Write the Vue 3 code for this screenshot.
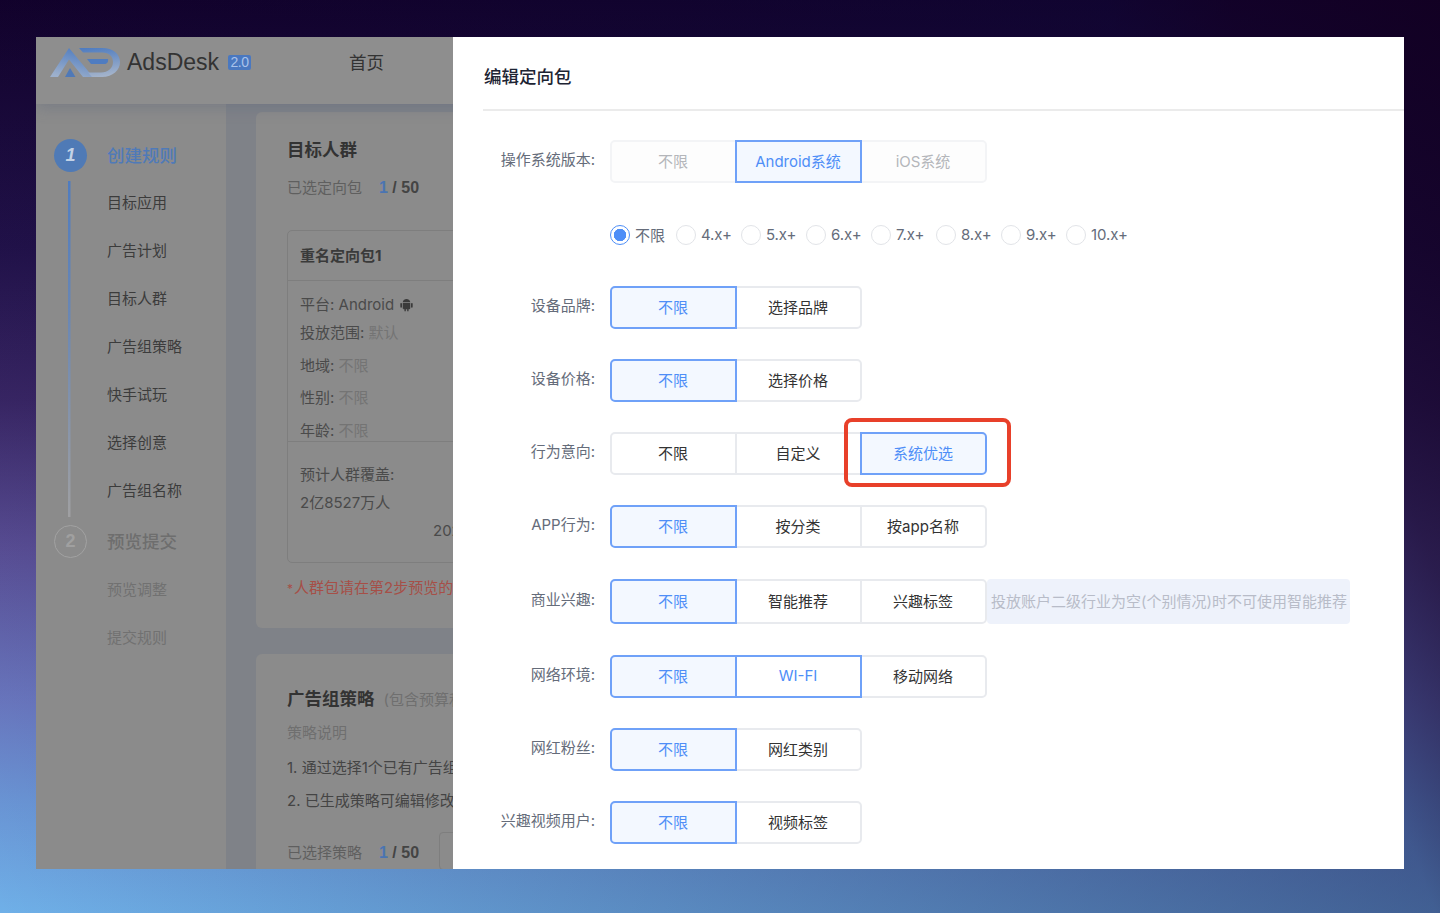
<script setup>
const subSteps = ['目标应用', '广告计划', '目标人群', '广告组策略', '快手试玩', '选择创意', '广告组名称']
const radios = ['不限', '4.x+', '5.x+', '6.x+', '7.x+', '8.x+', '9.x+', '10.x+']
const brandRow = { label: '设备品牌:', options: [['不限', 'on'], ['选择品牌', '']] }
const rows = [
  { label: '设备价格:', options: [['不限', 'on'], ['选择价格', '']] },
  { label: '行为意向:', options: [['不限', ''], ['自定义', ''], ['系统优选', 'on mark']] },
  { label: 'APP行为:', options: [['不限', 'on'], ['按分类', ''], ['按app名称', '']] },
  { label: '商业兴趣:', tall: true, tip: '投放账户二级行业为空(个别情况)时不可使用智能推荐', options: [['不限', 'on'], ['智能推荐', ''], ['兴趣标签', '']] },
  { label: '网络环境:', after: true, options: [['不限', 'on'], ['WI-FI', 'on plain'], ['移动网络', '']] },
  { label: '网红粉丝:', options: [['不限', 'on'], ['网红类别', '']] },
  { label: '兴趣视频用户:', options: [['不限', 'on'], ['视频标签', '']] }
]
</script>

<template>
  <div class="screen">
    <div class="window">
      <div class="page">
        <header class="top">
          <svg class="logo" viewBox="0 0 70 30" width="70" height="30" aria-label="AdsDesk">
            <defs>
              <linearGradient id="lg1" x1="0.7" y1="0" x2="0.3" y2="1">
                <stop offset="0" stop-color="#4f7cc0" />
                <stop offset="1" stop-color="#9db0cc" />
              </linearGradient>
              <linearGradient id="lg2" x1="0.2" y1="0" x2="0.4" y2="1">
                <stop offset="0" stop-color="#4f7cc0" />
                <stop offset="1" stop-color="#a3b3cb" />
              </linearGradient>
            </defs>
            <path d="M19 1 L43 30 H33 L19 12.5 L8 30 H0 Z" fill="url(#lg1)" />
            <path d="M15 30 L20 21 L25.5 30 Z" fill="#4f79b8" />
            <path d="M29 1 H52 C63 1 70 7 70 15 C70 23 63 30 52 30 H42 L38 25.5 H51 C58 25.5 63 21 63 15 C63 9.5 59 5.5 52 5.5 H33 Z" fill="url(#lg2)" />
            <path d="M37 12 H58 C58.5 15 57 17 54 17 H41 Z" fill="#4f7cc0" />
          </svg>
          <span class="brand">AdsDesk</span>
          <span class="ver">2.0</span>
          <nav class="nav">首页</nav>
        </header>
        <div class="body">
          <aside class="side">
            <div class="step">
              <span class="dot dot-on">1</span>
              <span class="step-name step-on">创建规则</span>
            </div>
            <div class="sub-line">
              <div class="sub-list">
                <div v-for="s in subSteps" :key="s" class="sub">{{ s }}</div>
              </div>
            </div>
            <div class="step step-two">
              <span class="dot dot-off">2</span>
              <span class="step-name step-off">预览提交</span>
            </div>
            <div class="sub-list-off">
              <div class="sub sub-off">预览调整</div>
              <div class="sub sub-off">提交规则</div>
            </div>
          </aside>
          <main class="main">
            <section class="card card-one">
              <h2 class="card-title">目标人群</h2>
              <div class="count">
                <span>已选定向包</span><b class="num"><i>1</i> / 50</b>
              </div>
              <div class="pack">
                <div class="pack-head">重名定向包1</div>
                <div class="pack-body">
                  <div class="info info-a">
                    平台: Android
                    <svg class="droid" viewBox="0 0 16 16" width="15" height="15">
                      <path d="M4 5.6 C4 3.4 5.8 2 8 2 C10.2 2 12 3.4 12 5.6 Z" fill="#3b3b3b" />
                      <path d="M4 6.4 H12 V12 C12 12.5 11.6 13 11 13 H10.2 V15.2 H8.7 V13 H7.3 V15.2 H5.8 V13 H5 C4.4 13 4 12.5 4 12 Z" fill="#3b3b3b" />
                      <rect x="1.4" y="6.4" width="1.8" height="5" rx="0.9" fill="#3b3b3b" />
                      <rect x="12.8" y="6.4" width="1.8" height="5" rx="0.9" fill="#3b3b3b" />
                    </svg>
                  </div>
                  <div class="info info-b">投放范围: <span class="mute">默认</span></div>
                  <div class="info info-c">地域: <span class="mute">不限</span></div>
                  <div class="info">性别: <span class="mute">不限</span></div>
                  <div class="info info-e">年龄: <span class="mute">不限</span></div>
                </div>
                <div class="pack-foot">
                  <div>预计人群覆盖:</div>
                  <div>2亿8527万人</div>
                  <div class="pack-date">2021-01-01</div>
                </div>
              </div>
              <p class="warn"><span class="star">*</span>人群包请在第2步预览的人群包中查看</p>
            </section>
            <section class="card card-two">
              <h2 class="card-title">广告组策略<small class="card-sub">(包含预算和出价)</small></h2>
              <div class="tip-title">策略说明</div>
              <div class="tip-a">1. 通过选择1个已有广告组生成策略</div>
              <div class="tip-b">2. 已生成策略可编辑修改</div>
              <div class="count count-two">
                <span>已选择策略</span><b class="num"><i>1</i> / 50</b>
                <span class="box"></span>
              </div>
            </section>
          </main>
        </div>
      </div>

      <div class="drawer">
        <h1 class="drawer-title">编辑定向包</h1>
        <div class="form">
          <div class="row">
            <label class="lab">操作系统版本:</label>
            <div class="seg seg-muted">
              <button class="btn">不限</button>
              <button class="btn on">Android系统</button>
              <button class="btn">iOS系统</button>
            </div>
          </div>
          <div class="radios">
            <div v-for="(r, i) in radios" :key="r" class="radio-item">
              <span class="radio" :class="{ picked: i === 0 }"></span>
              <span>{{ r }}</span>
            </div>
          </div>
          <div class="row">
            <label class="lab">{{ brandRow.label }}</label>
            <div class="seg">
              <button v-for="o in brandRow.options" :key="o[0]" class="btn" :class="o[1]">{{ o[0] }}</button>
            </div>
          </div>
          <div v-for="row in rows" :key="row.label" class="row" :class="{ tall: row.tall, after: row.after }">
            <label class="lab">{{ row.label }}</label>
            <div class="seg">
              <button v-for="o in row.options" :key="o[0]" class="btn" :class="o[1]">
                {{ o[0] }}<span v-if="o[1].includes('mark')" class="ring"></span>
              </button>
            </div>
            <div v-if="row.tip" class="tip">{{ row.tip }}</div>
          </div>
        </div>
      </div>
    </div>
  </div>
</template>

<style>
html, body { margin: 0; overflow: hidden; }
</style>

<style scoped>
.screen {
  height: 913px;
  box-sizing: border-box;
  padding: 37px 36px 44px;
  overflow: hidden;
  background:
    linear-gradient(70deg, rgba(15, 8, 50, 0) 0%, rgba(15, 8, 55, 0.48) 81%, rgba(18, 2, 40, 0.68) 88%, rgba(18, 0, 34, 0.85) 100%),
    linear-gradient(180deg, #12012a 0%, #22124a 27%, #3a2766 44%, #5a4f96 60%, #6a78c0 77%, #6a96d6 88%, #6fb0e8 100%);
  font-family: Inter, "Noto Sans CJK SC", sans-serif;
}
.window {
  position: relative;
  height: 832px;
  overflow: hidden;
  background: #7f8288;
}
.page { height: 100%; display: flex; flex-direction: column; }

.top {
  position: relative;
  z-index: 1;
  flex: none;
  height: 67px;
  box-sizing: border-box;
  padding: 10px 0 0 14px;
  display: flex;
  align-items: flex-start;
  background: #8e8e8e;
  box-shadow: 0 3px 14px rgba(95, 105, 125, 0.45);
}
.logo { flex: none; }
.brand {
  margin-left: 7px;
  font: 23px/30px "Liberation Sans", sans-serif;
  color: #333;
}
.ver {
  margin: 8px 0 0 9px;
  width: 23px;
  height: 15px;
  border-radius: 2px;
  background: #4a78c0;
  color: #a9c2ea;
  font: 14px/15px "Liberation Sans", sans-serif;
  letter-spacing: -0.5px;
  text-align: center;
}
.nav {
  margin: 2px 0 0 98px;
  font-size: 17.5px;
  line-height: 28px;
  color: #333;
}

.body { flex: 1; min-height: 0; display: flex; }
.side {
  flex: none;
  width: 190px;
  box-sizing: border-box;
  padding: 35px 0 0 18px;
  background: #8b8b8b;
}
.step { display: flex; align-items: center; height: 33px; }
.step-two { margin-top: 8px; }
.dot {
  flex: none;
  width: 33px;
  height: 33px;
  box-sizing: border-box;
  border-radius: 50%;
  display: flex;
  align-items: center;
  justify-content: center;
  font-family: "Liberation Sans", sans-serif;
  font-weight: 700;
  font-size: 18px;
}
.dot-on { background: #4f7ab6; color: #c3d2e6; font-style: italic; }
.dot-off { border: 1.5px solid #a2a2a2; color: #a0a0a0; }
.step-name { margin-left: 20px; padding-bottom: 3px; font-size: 17.5px; font-weight: 500; }
.step-on { color: #4f7ab8; }
.step-off { color: #6e6e6e; }
.sub-line {
  display: flow-root;
  margin: 9px 0 0 14px;
  padding-left: 39px;
  height: 336px;
  background: linear-gradient(180deg, #4f7cc0 0%, #6a87b4 40%, #a0a0a2 100%) left top / 2.5px 100% no-repeat;
}
.sub-list { margin-top: -2px; }
.sub { height: 48px; line-height: 48px; font-size: 15px; color: #3c3c3c; }
.sub-list-off { margin: 8px 0 0 53px; }
.sub-off { color: #717171; }

.main { flex: 1; min-width: 0; padding: 8px 0 0 30px; overflow: hidden; }
.card {
  width: 1100px;
  box-sizing: border-box;
  padding-left: 31px;
  border-radius: 6px;
  background: #8b8b8b;
}
.card-one { height: 516px; padding-top: 26px; }
.card-two { margin-top: 26px; height: 300px; padding-top: 33px; }
.card-title {
  margin: 0;
  font-size: 17.5px;
  line-height: 24px;
  font-weight: 700;
  color: #333;
}
.card-sub { margin-left: 9px; font-size: 15px; font-weight: 400; color: #6f6f6f; }
.count {
  margin-top: 13px;
  display: flex;
  align-items: center;
  height: 22px;
  font-size: 15px;
  color: #5f5f5f;
}
.num {
  margin: 3px 0 0 17px;
  font: 700 16px/22px "Liberation Sans", sans-serif;
  color: #444;
}
.num i { font-style: normal; color: #4a74b2; }
.pack {
  margin-top: 33px;
  width: 500px;
  height: 333px;
  box-sizing: border-box;
  border: 1px solid #7e7e7e;
  border-radius: 5px;
  font-size: 15px;
  color: #4a4a4a;
}
.pack-head {
  height: 49px;
  line-height: 49px;
  padding-left: 12px;
  border-bottom: 1px solid #7e7e7e;
  font-weight: 700;
  font-size: 15px;
  color: #3a3a3a;
}
.pack-body {
  height: 161px;
  overflow: hidden;
  padding: 8px 0 0 12px;
  box-sizing: border-box;
  border-bottom: 1px solid #7e7e7e;
}
.info { height: 32px; line-height: 32px; }
.info-b { margin-top: -4px; }
.info-c { margin-top: 1px; }
.info-e { margin-top: 1px; }
.mute { color: #747474; }
.droid { margin-left: 1px; vertical-align: -2px; }
.pack-foot { padding: 19px 0 0 12px; line-height: 28px; }
.pack-date { padding-left: 133px; }
.warn {
  margin: 14px 0 0;
  font-size: 15px;
  line-height: 22px;
  color: #a64f47;
}
.star { font-size: 12px; margin-right: 1px; }
.tip-title { margin-top: 10px; font-size: 15px; line-height: 22px; color: #6f6f6f; }
.tip-a { margin-top: 13px; font-size: 15px; line-height: 22px; color: #444; }
.tip-b { margin-top: 11px; font-size: 15px; line-height: 22px; color: #444; }
.count-two { margin-top: 20px; height: 38px; }
.box {
  margin-left: 20px;
  width: 300px;
  height: 38px;
  box-sizing: border-box;
  border: 1px solid #7e7e7e;
  border-radius: 4px;
}

.drawer {
  position: absolute;
  z-index: 2;
  top: 0;
  right: 0;
  bottom: 0;
  width: 951px;
  overflow: hidden;
  background: #fff;
}
.drawer-title {
  margin: 0 0 0 30px;
  height: 74px;
  box-sizing: border-box;
  padding: 26px 0 0 1px;
  font-size: 17.5px;
  line-height: 27px;
  font-weight: 500;
  color: #1d2433;
  border-bottom: 2px solid #ebebeb;
}
.form { padding-top: 29px; display: flex; flex-direction: column; gap: 30px; }
.row { display: flex; align-items: center; height: 43px; }
.row.tall { height: 45px; margin-top: 1px; }
.row.after { margin-top: 1px; }
.lab {
  flex: none;
  width: 142px;
  margin-right: 15px;
  padding-bottom: 6px;
  text-align: right;
  white-space: nowrap;
  font-size: 15px;
  color: #656c7a;
}
.seg { display: flex; height: 100%; }
.btn {
  position: relative;
  width: 127px;
  height: 100%;
  margin: 0 0 0 -2px;
  padding: 0 1px 2px 0;
  box-sizing: border-box;
  border: 2px solid #e8eaee;
  background: #fff;
  color: #333;
  font: inherit;
  font-size: 15px;
}
.btn:first-child { margin-left: 0; border-radius: 5px 0 0 5px; }
.btn:last-child { border-radius: 0 5px 5px 0; }
.btn.on { z-index: 1; border-color: #6fa1f8; background: #f3f8ff; color: #4e8ef7; }
.btn.plain { background: #fff; }
.seg-muted .btn { border-color: #f3f4f6; background: #fdfdfd; color: #b4b6ba; }
.seg-muted .btn.on { border-color: #6fa1f8; background: #f3f8ff; color: #4e8ef7; }
.ring {
  position: absolute;
  top: -16px;
  right: -26px;
  bottom: -14px;
  left: -18px;
  border: 4px solid #e8402a;
  border-radius: 8px;
}
.tip {
  height: 100%;
  padding: 0 3px 2px 4px;
  box-sizing: border-box;
  display: flex;
  align-items: center;
  border-radius: 4px;
  background: #eef2fb;
  white-space: nowrap;
  font-size: 15px;
  color: #b8bcc8;
}
.radios { margin-left: 157px; height: 43px; display: flex; align-items: center; }
.radio-item {
  width: 65px;
  flex: none;
  display: flex;
  align-items: center;
  gap: 5px;
  font-size: 15px;
  letter-spacing: -0.1px;
  color: #656c7a;
  white-space: nowrap;
}
.radio-item span:last-child { padding-bottom: 1px; }
.radio-item:first-child { width: 66px; }
.radio {
  flex: none;
  width: 20px;
  height: 20px;
  box-sizing: border-box;
  border: 1.5px solid #e2e4e8;
  border-radius: 50%;
  background: #fff;
}
.radio.picked {
  border-color: #4e8ef7;
  background: radial-gradient(circle, #4e8ef7 0 6px, #fff 6.5px);
}
</style>
